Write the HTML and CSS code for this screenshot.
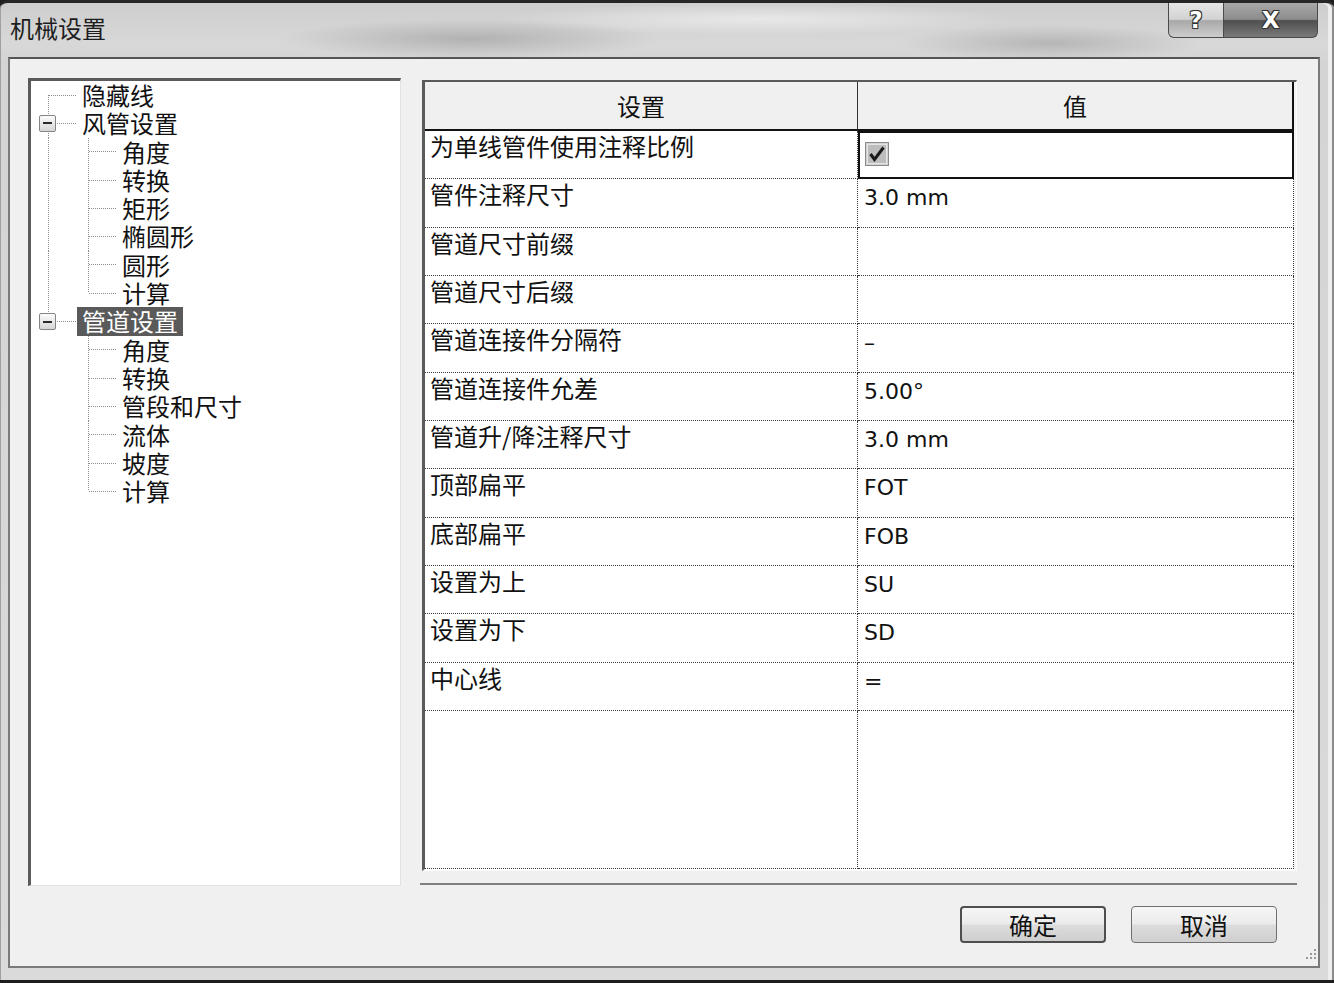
FILE: index.html
```html
<!DOCTYPE html>
<html lang="zh-CN">
<head>
    <meta charset="UTF-8">
    <title>机械设置</title>
    <link rel="stylesheet" href="styles.css">
</head>
<body>
    <div class="window">
        <div class="titlebar">
            <span class="title">机械设置</span>
            <div class="caption">
                <div class="cap cap-help">?</div>
                <div class="cap cap-close">X</div>
            </div>
        </div>

        <div class="client">
            <div class="main">
                <div class="tree">
                    <div class="node"><span class="twig first"></span><span class="label">隐藏线</span></div>
                    <div class="node"><span class="twig tee"><span class="toggle"></span></span><span class="label">风管设置</span></div>
                    <div class="node"><span class="rail"></span><span class="twig tee"></span><span class="label">角度</span></div>
                    <div class="node"><span class="rail"></span><span class="twig tee"></span><span class="label">转换</span></div>
                    <div class="node"><span class="rail"></span><span class="twig tee"></span><span class="label">矩形</span></div>
                    <div class="node"><span class="rail"></span><span class="twig tee"></span><span class="label">椭圆形</span></div>
                    <div class="node"><span class="rail"></span><span class="twig tee"></span><span class="label">圆形</span></div>
                    <div class="node"><span class="rail"></span><span class="twig elbow"></span><span class="label">计算</span></div>
                    <div class="node"><span class="twig elbow"><span class="toggle"></span></span><span class="label selected">管道设置</span></div>
                    <div class="node"><span class="rail blank"></span><span class="twig tee"></span><span class="label">角度</span></div>
                    <div class="node"><span class="rail blank"></span><span class="twig tee"></span><span class="label">转换</span></div>
                    <div class="node"><span class="rail blank"></span><span class="twig tee"></span><span class="label">管段和尺寸</span></div>
                    <div class="node"><span class="rail blank"></span><span class="twig tee"></span><span class="label">流体</span></div>
                    <div class="node"><span class="rail blank"></span><span class="twig tee"></span><span class="label">坡度</span></div>
                    <div class="node"><span class="rail blank"></span><span class="twig elbow"></span><span class="label">计算</span></div>
                </div>

                <div class="grid-col">
                    <div class="panel">
                        <div class="grid">
                            <div class="head">设置</div>
                            <div class="head head-value">值</div>

                            <div class="cell">为单线管件使用注释比例</div>
                            <div class="cell value focus">
                                <svg class="check" width="24" height="24" viewBox="0 0 24 24">
                                    <rect x="0.5" y="0.5" width="23" height="23" fill="#d2d2d2" stroke="#8a8a8a"/>
                                    <rect x="2.5" y="2.5" width="19" height="19" fill="#bdbdbd" stroke="#e4e4e4"/>
                                    <path d="M5.5 12 L9.5 17.5 L18.5 5.5" fill="none" stroke="#1a1a1a" stroke-width="3"/>
                                </svg>
                            </div>

                            <div class="cell">管件注释尺寸</div>
                            <div class="cell value">3.0 mm</div>

                            <div class="cell">管道尺寸前缀</div>
                            <div class="cell value"></div>

                            <div class="cell">管道尺寸后缀</div>
                            <div class="cell value"></div>

                            <div class="cell">管道连接件分隔符</div>
                            <div class="cell value">–</div>

                            <div class="cell">管道连接件允差</div>
                            <div class="cell value">5.00°</div>

                            <div class="cell">管道升/降注释尺寸</div>
                            <div class="cell value">3.0 mm</div>

                            <div class="cell">顶部扁平</div>
                            <div class="cell value">FOT</div>

                            <div class="cell">底部扁平</div>
                            <div class="cell value">FOB</div>

                            <div class="cell">设置为上</div>
                            <div class="cell value">SU</div>

                            <div class="cell">设置为下</div>
                            <div class="cell value">SD</div>

                            <div class="cell">中心线</div>
                            <div class="cell value">=</div>

                            <div class="cell"></div>
                            <div class="cell value"></div>
                        </div>
                    </div>
                </div>
            </div>

            <div class="footer">
                <button class="btn btn-default">确定</button>
                <button class="btn">取消</button>
                <svg class="grip" width="16" height="16" viewBox="0 0 16 16">
                    <g fill="#9a9a9a">
                        <rect x="12" y="2" width="2" height="2"/>
                        <rect x="8" y="6" width="2" height="2"/>
                        <rect x="12" y="6" width="2" height="2"/>
                        <rect x="4" y="10" width="2" height="2"/>
                        <rect x="8" y="10" width="2" height="2"/>
                        <rect x="12" y="10" width="2" height="2"/>
                    </g>
                </svg>
            </div>
        </div>
    </div>
</body>
</html>
```

FILE: styles.css
```css
body {
    margin: 0;
    background: #1e1e1e;
    font-family: "Noto Sans CJK SC", sans-serif;
    color: #111;
}

.window {
    width: 1334px;
    height: 983px;
    box-sizing: border-box;
    display: flex;
    flex-direction: column;
    padding: 0 14px 12px 8px;
    border-top: 3px solid #262626;
    border-bottom: 3px solid #1e1e1e;
    border-radius: 8px 8px 0 0;
    background:
        radial-gradient(ellipse 190px 20px at 470px 36px, rgba(140, 140, 140, 0.5), transparent),
        radial-gradient(ellipse 150px 18px at 1050px 40px, rgba(140, 140, 140, 0.45), transparent),
        radial-gradient(ellipse 260px 16px at 760px 16px, rgba(255, 255, 255, 0.5), transparent),
        linear-gradient(#cdcdcd, #d8d8d8 40px, #d4d4d4 60px, #dadada);
    box-shadow: inset 1px 0 0 #a0a0a0, inset -2px 0 0 #8c8c8c, inset -6px 0 0 #eeeeee;
}

/* title bar */

.titlebar {
    height: 54px;
    display: flex;
    align-items: center;
    padding-left: 2px;
}

.title {
    font-size: 24px;
    line-height: 1;
    color: #1e1e1e;
    margin-top: -4px;
}

.caption {
    margin-left: auto;
    margin-right: 2px;
    align-self: flex-start;
    display: flex;
}

.cap {
    height: 35px;
    box-sizing: border-box;
    border: 1px solid #4a4a4a;
    border-top: none;
    display: flex;
    align-items: center;
    justify-content: center;
    font-family: "DejaVu Sans", sans-serif;
    font-weight: bold;
    color: #fff;
    text-shadow: 1px 1px 0 #333, -1px -1px 0 #333, 1px -1px 0 #333, -1px 1px 0 #333;
}

.cap-help {
    width: 56px;
    font-size: 23px;
    border-radius: 0 0 0 6px;
    background: linear-gradient(#e6e6e6, #d2d2d2 48%, #a8a8a8 52%, #cdcdcd);
}

.cap-close {
    width: 94px;
    font-size: 23px;
    border-left: none;
    border-radius: 0 0 6px 0;
    background: linear-gradient(#a9a9a9, #8c8c8c 48%, #4e4e4e 52%, #7a7a7a);
}

/* client area */

.client {
    flex: 1;
    display: flex;
    flex-direction: column;
    padding: 19px 0 0 18px;
    background: #f0f0f0;
    border: 2px solid #7a7a7a;
    border-top-color: #555;
}

.main {
    height: 808px;
    display: flex;
    align-items: flex-start;
    gap: 19px;
    margin-right: 21px;
}

/* tree */

.tree {
    width: 373px;
    height: 808px;
    box-sizing: border-box;
    background: #fff;
    border-left: 3px solid #5a5a5a;
    border-top: 3px solid #5a5a5a;
    border-right: 1px solid #e2e2e2;
    border-bottom: 1px solid #e2e2e2;
}

.node {
    display: flex;
    height: 28.3px;
}

.rail {
    width: 40px;
    flex: none;
    background: repeating-linear-gradient(to bottom, #8c8c8c 0 1px, transparent 1px 2px) 17px 0 / 1px 100% no-repeat;
}

.rail.blank {
    background: none;
}

.twig {
    width: 46px;
    flex: none;
    display: flex;
    align-items: center;
    background-image:
        repeating-linear-gradient(to bottom, #8c8c8c 0 1px, transparent 1px 2px),
        repeating-linear-gradient(to right, #8c8c8c 0 1px, transparent 1px 2px);
    background-repeat: no-repeat;
    background-position: 17px 0, 18px 50%;
    background-size: 1px 100%, 28px 1px;
}

.twig.elbow {
    background-size: 1px 50%, 28px 1px;
}

.twig.first {
    background-position: 17px 100%, 18px 50%;
    background-size: 1px 50%, 28px 1px;
}

.toggle {
    width: 17px;
    height: 17px;
    margin-left: 8px;
    box-sizing: border-box;
    border: 1px solid #858585;
    border-radius: 2px;
    background: linear-gradient(#fcfcfc, #d6d6d6);
    display: flex;
    align-items: center;
    justify-content: center;
}

.toggle::after {
    content: "";
    width: 9px;
    height: 2px;
    background: #2a2a2a;
}

.label {
    padding: 0 5px;
    font-size: 24px;
    line-height: 28.3px;
    white-space: nowrap;
}

.label.selected {
    background: #5a5a5a;
    color: #fff;
}

/* settings grid */

.grid-col {
    width: 877px;
    padding: 2px 0 12px;
    border-bottom: 2px solid #7f7f7f;
}

.panel {
    margin-left: 2px;
    background: #f4f4f4;
    border-left: 3px solid #5a5a5a;
    border-top: 2px solid #5a5a5a;
    border-right: 1px solid #fdfdfd;
    border-bottom: 2px solid #fdfdfd;
}

.grid {
    width: 869px;
    height: 787px;
    display: grid;
    grid-template-columns: 433px 436px;
    grid-template-rows: 49px repeat(12, 48.33px) 1fr;
    background: #fff;
}

.head {
    background: #f0f0f0;
    border-bottom: 2px solid #111;
    border-right: 1px solid #333;
    text-align: center;
    font-size: 24px;
    line-height: 47px;
}

.head-value {
    border-right: 2px solid #111;
}

.cell {
    padding: 0 5px;
    border-bottom: 1px dotted #3c3c3c;
    border-right: 1px dotted #3c3c3c;
    font-size: 24px;
    line-height: 30px;
    white-space: nowrap;
}

.cell.value {
    padding: 4px 6px 0;
    font-family: "DejaVu Sans", sans-serif;
    font-size: 22px;
}

.cell.focus {
    padding-top: 11px;
    padding-left: 7px;
    outline: 2px solid #111;
    outline-offset: -2px;
}

.check {
    display: block;
}

/* buttons */

.footer {
    flex: 1;
    display: flex;
    justify-content: flex-end;
    align-items: flex-start;
    gap: 25px;
    padding-top: 20px;
}

.btn {
    width: 146px;
    height: 37px;
    box-sizing: border-box;
    padding: 0;
    border: 1px solid #707070;
    border-radius: 4px;
    background: linear-gradient(#f6f6f6, #ebebeb 48%, #dcdcdc 52%, #cfcfcf);
    font-family: "Noto Sans CJK SC", sans-serif;
    font-size: 24px;
    line-height: 33px;
    color: #111;
}

.btn-default {
    border: 2px solid #4e4e4e;
}

.grip {
    align-self: flex-end;
    margin-bottom: 3px;
}
```
